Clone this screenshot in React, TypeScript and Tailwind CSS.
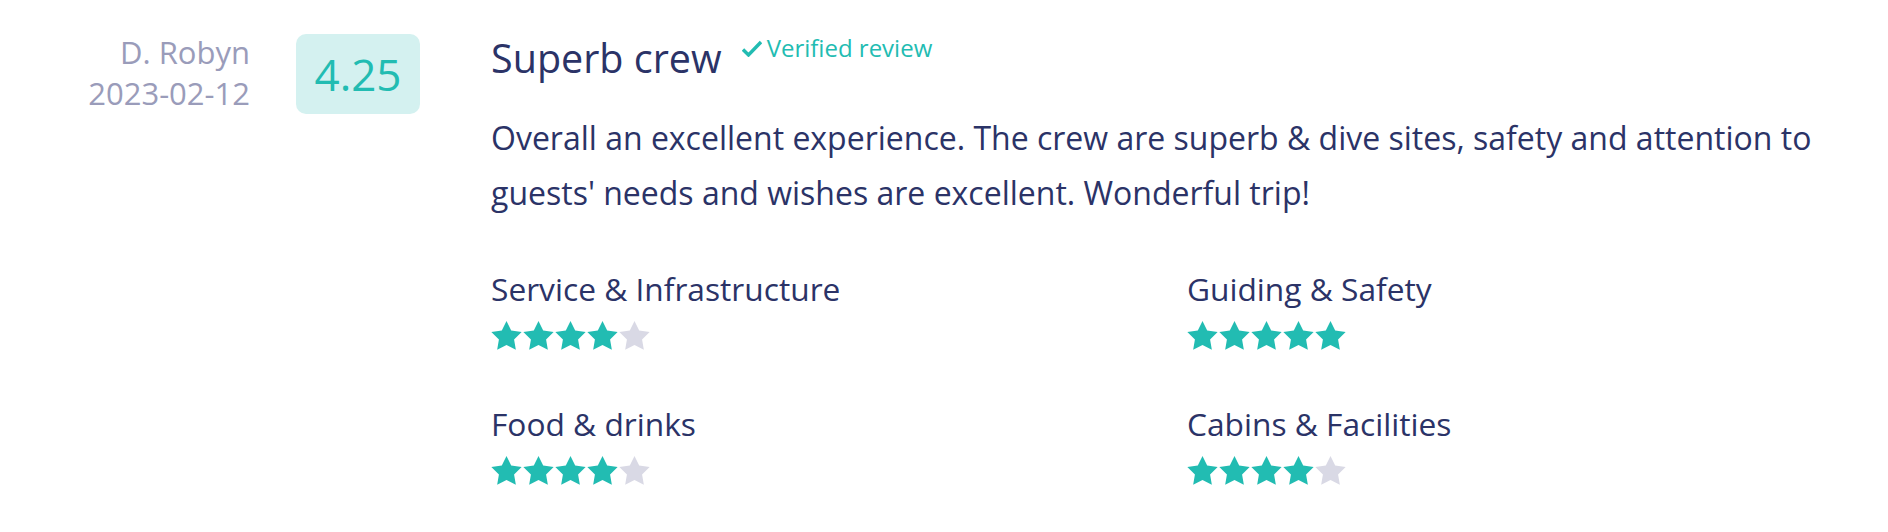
import React from 'react';

const Star: React.FC<{ filled: boolean }> = ({ filled }) => (
  <svg viewBox="56 18 464 444" className="w-[31px] h-[29px] mr-[1px]">
    <path
      fill={filled ? '#22bcb2' : '#d9d9e5'}
      d="M288 18l72 146 160 23-116 113 27 160-143-75-143 75 27-160L56 187l160-23z"
    />
  </svg>
);

const Stars: React.FC<{ value: number }> = ({ value }) => (
  <div className="flex mt-[12px]">
    {[1, 2, 3, 4, 5].map((i) => (
      <Star key={i} filled={i <= value} />
    ))}
  </div>
);

const categories = [
  { label: 'Service & Infrastructure', value: 4 },
  { label: 'Guiding & Safety', value: 5 },
  { label: 'Food & drinks', value: 4 },
  { label: 'Cabins & Facilities', value: 4 },
];

const App: React.FC = () => {
  return (
    <div
      className="w-full min-h-[532px] bg-white flex items-start pt-[34px]"
      style={{ fontFamily: '"Open Sans", "Noto Sans", sans-serif' }}
    >
      <div className="w-[250px] shrink-0 text-right text-[31px] leading-[41px] text-[#9a9cba] -mt-[2px]">
        <div>D. Robyn</div>
        <div>2023-02-12</div>
      </div>

      <div className="ml-[46px] w-[124px] h-[80px] shrink-0 rounded-[10px] bg-[#d4f1f0] flex items-center justify-center text-[44px] text-[#22bcb2]">
        4.25
      </div>

      <div className="ml-[71px] w-[1392px] shrink-0 text-[#2b3367]">
        <div className="flex items-start gap-[20px]">
          <h2 className="text-[39.5px] leading-[48px]">Superb crew</h2>
          <span className="flex items-center gap-[5px] text-[24px] leading-[28px] text-[#22bcb2]">
            <svg viewBox="0 0 20 17" className="w-[20px] h-[17px]">
              <path d="M1 9.5l5.5 5.5L19 2" fill="none" stroke="#22bcb2" strokeWidth="3.4" />
            </svg>
            Verified review
          </span>
        </div>

        <p className="mt-[28px] pr-[40px] text-[32px] leading-[55px]">
          Overall an excellent experience. The crew are superb &amp; dive sites, safety and attention to guests' needs and wishes are excellent. Wonderful trip!
        </p>

        <div className="grid grid-cols-2 mt-[49px] gap-y-[54px]">
          {categories.map((c) => (
            <div key={c.label}>
              <div className="text-[31.7px] leading-[40px]">{c.label}</div>
              <Stars value={c.value} />
            </div>
          ))}
        </div>
      </div>
    </div>
  );
};

export default App;
